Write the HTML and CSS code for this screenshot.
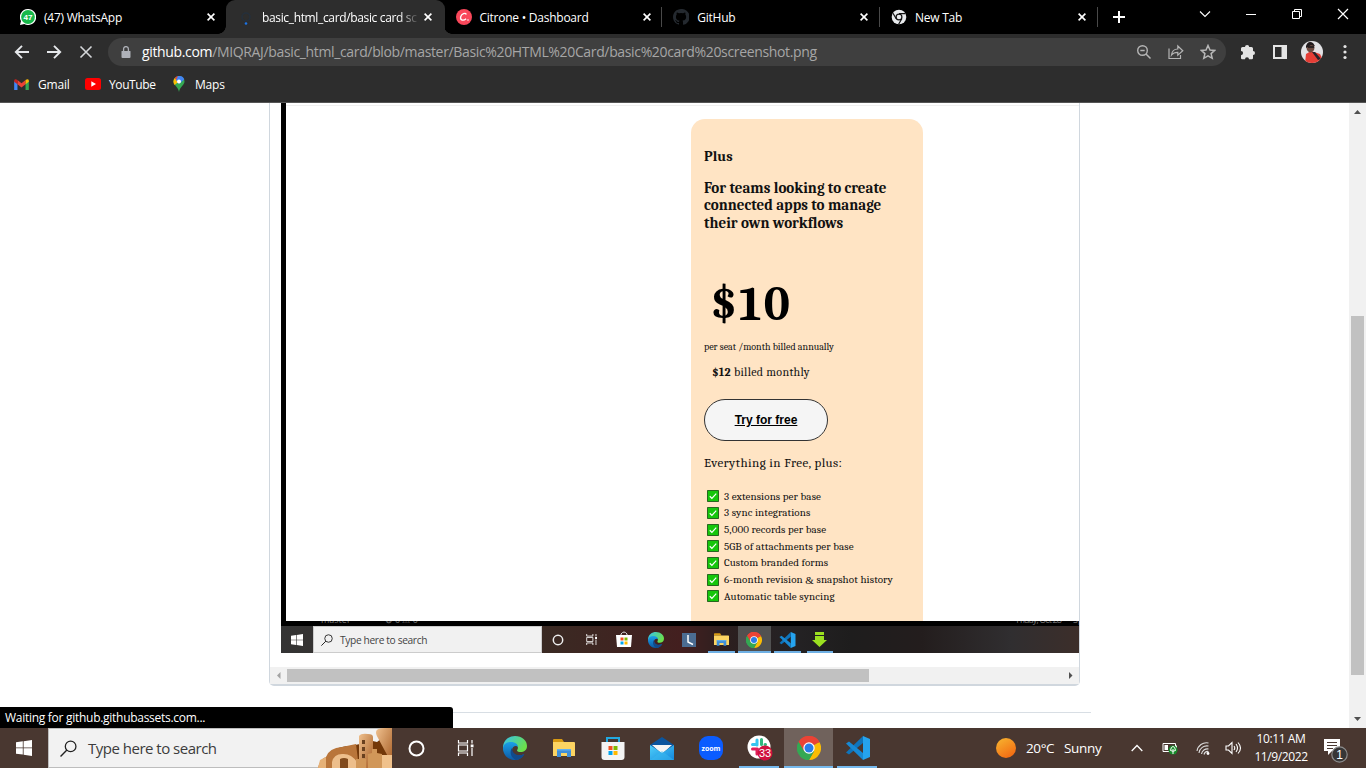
FILE: index.html
```html
<!DOCTYPE html>
<html lang="en">
<head>
<meta charset="utf-8">
<title>basic_html_card/basic card screenshot.png</title>
<link rel="stylesheet" href="styles.css">
</head>
<body>
<svg class="defs" width="0" height="0">
  <defs>
    <linearGradient id="edgeA" x1="0" y1="0" x2="1" y2="0.5"><stop offset="0" stop-color="#35c1f1"/><stop offset="1" stop-color="#6be04b"/></linearGradient>
    <linearGradient id="edgeB" x1="0" y1="0" x2="0" y2="1"><stop offset="0" stop-color="#1ba0e8"/><stop offset="1" stop-color="#0c59a4"/></linearGradient>
    <linearGradient id="sunG" x1="0" y1="0" x2="0.6" y2="1"><stop offset="0" stop-color="#f7b731"/><stop offset="1" stop-color="#f36d13"/></linearGradient>
    <linearGradient id="sand" x1="0" y1="0" x2="1" y2="1"><stop offset="0" stop-color="#efc08e"/><stop offset="1" stop-color="#a85f26"/></linearGradient>
    <linearGradient id="mailG" x1="0" y1="0" x2="1" y2="1"><stop offset="0" stop-color="#4fd0fa"/><stop offset="1" stop-color="#1387dd"/></linearGradient>
    <clipPath id="face"><circle cx="11" cy="11" r="11"/></clipPath>
  </defs>
  <symbol id="close" viewBox="0 0 8 8"><path d="M.6.6l6.8 6.8M7.4.6L.6 7.4" stroke="#fff" stroke-width="1.6" fill="none"/></symbol>
  <symbol id="chrome" viewBox="0 0 24 24">
    <path d="M12 12L1.6 6A12 12 0 0 1 22.4 6z" fill="#ea4335"/>
    <path d="M12 12V24A12 12 0 0 1 1.6 6z" fill="#34a853"/>
    <path d="M12 12L22.4 6A12 12 0 0 1 12 24L17 15z" fill="#fbbc04"/>
    <path d="M1.6 6L6.8 15 12 6.5H22.7A12 12 0 0 0 1.6 6z" fill="#ea4335"/>
    <path d="M12 24L17.2 15 6.8 15A12 12 0 0 0 12 24z" fill="#34a853"/>
    <path d="M1.6 6L6.8 15 12 24A12 12 0 0 1 1.6 6z" fill="#34a853"/>
    <circle cx="12" cy="12" r="5.7" fill="#fff"/><circle cx="12" cy="12" r="4.5" fill="#2a7de8"/>
  </symbol>
  <symbol id="edge" viewBox="0 0 24 24">
    <path d="M0 12C0 4 6 0 12 0c7 0 12 4.500 12 10 0 4-3 6-6.500 6-3 0-4-1.300-3.200-2.300C16 11 14 8 10 8 5 8 1 10 0 15z" fill="url(#edgeA)"/>
    <path d="M0 12c.5-4 4-6 8-6 4.500 0 7 2.500 7 5-1.500-2-6-1-6 3.500 0 4 5 7 12 3.500C19 22 16 24 12 24 5 24 0 19 0 12z" fill="url(#edgeB)"/>
    <path d="M9 12c-3 4-1 10 4 12 4-.3 7-3 8.500-6C15 21 9 18 9 12z" fill="#114a8b"/>
  </symbol>
  <symbol id="folder" viewBox="0 0 22 18">
    <path d="M0 1q0-1 1-1h8l2 3H0z" fill="#d89a13"/><path d="M0 3h21q1 0 1 1v13H0z" fill="#fcd462"/>
    <path d="M4 18v-8h14v8h-4v-4H8v4z" fill="#3f8fd8"/><path d="M4 10h14v1.500H4z" fill="#62b1ee"/>
  </symbol>
  <symbol id="store" viewBox="0 0 24 24">
    <path d="M6 7V2h12v5" fill="none" stroke="#22a9e0" stroke-width="2"/><path d="M.5 6h23v15q0 3-3 3h-17q-3 0-3-3z" fill="#f4f4f4"/>
    <path d="M7.500 10h4v4h-4z" fill="#f25022"/><path d="M12.500 10h4v4h-4z" fill="#7fba00"/><path d="M7.500 15h4v4h-4z" fill="#00a4ef"/><path d="M12.500 15h4v4h-4z" fill="#ffb900"/>
  </symbol>
  <symbol id="vscode" viewBox="0 0 24 24">
    <path d="M17 0l7 3v18l-7 3z" fill="#25a3ee"/><path d="M17 0v7L3 18.500l-3-2z" fill="#0f74bb"/><path d="M0 7.500l3-2L17 17v7z" fill="#1789d4"/>
  </symbol>
  <symbol id="win" viewBox="0 0 16 16"><path d="M0 2.300L6.800 1.300v6.200H0zM7.600 1.200L16 0v7.500H7.600zM0 8.300h6.800v6.300L0 13.700zM7.600 8.300H16V16l-8.400-1.200z" fill="#fff"/></symbol>
  <symbol id="task" viewBox="0 0 16 16"><path d="M1 0v3h9V0M1 16v-3h9v3M1 5h9v6H1zM14.500 0v3.500M14.500 8v8" fill="none" stroke="#fff" stroke-width="1.200"/><path d="M13.200 4.500h2.800v2.800h-2.800z" fill="#fff"/></symbol>
  <symbol id="loupe" viewBox="0 0 16 16"><circle cx="10" cy="6" r="5" fill="none" stroke="#222" stroke-width="1.200"/><path d="M6.500 9.500L.5 15.500" stroke="#222" stroke-width="1.300"/></symbol>
  <symbol id="tick" viewBox="0 0 13 13"><path d="M.5.500h12v12H.5z" fill="#16c60c" stroke="#1c5a18"/><path d="M3 6.800l2.300 2.300L10 4" fill="none" stroke="#fff" stroke-width="1.300"/></symbol>
</svg>

<header class="browser">
  <div class="tabstrip">
    <div class="tab">
      <svg class="fav" viewBox="0 0 16 16"><path d="M8 0a8 8 0 1 1-3.700 15L0 16l1-4A8 8 0 0 1 8 0z" fill="#fff"/><circle cx="8" cy="8" r="6.900" fill="#17b84a"/><text x="8" y="10.800" class="favnum">47</text></svg>
      <span class="tab-title">(47) WhatsApp</span><svg class="x"><use href="#close"/></svg>
    </div>
    <div class="tab active">
      <svg class="fav" viewBox="0 0 16 16"><circle cx="8" cy="8" r="4" fill="none" stroke="#25303c" stroke-width="1.500"/><circle cx="8" cy="14.500" r="1.300" fill="#1a73e8"/></svg>
      <span class="tab-title fade">basic_html_card/basic card sc</span><svg class="x"><use href="#close"/></svg>
    </div>
    <div class="tab sep">
      <svg class="fav" viewBox="0 0 16 16"><circle cx="8" cy="8" r="8" fill="#f9475a"/><path d="M10.300 5.500C9.500 3.500 5.500 4.500 4.600 8c-.6 3.500 3 4 5.500 1.700" fill="none" stroke="#fff" stroke-width="1.300"/><circle cx="12" cy="11" r=".8" fill="#fff"/></svg>
      <span class="tab-title">Citrone • Dashboard</span><svg class="x"><use href="#close"/></svg>
    </div>
    <div class="tab sep">
      <svg class="fav" viewBox="0 0 16 16"><path fill="#24292f" d="M8 0C3.580 0 0 3.580 0 8c0 3.540 2.290 6.530 5.470 7.590.4.070.55-.17.55-.38v-1.330c-2.010.37-2.530-.49-2.690-.94-.09-.23-.48-.94-.82-1.130-.28-.15-.68-.52-.01-.53.63-.01 1.080.58 1.230.82.72 1.210 1.870.87 2.330.66.070-.52.280-.87.510-1.070-1.780-.2-3.640-.89-3.640-3.950 0-.87.31-1.590.82-2.150-.08-.2-.36-1.020.08-2.120 0 0 .67-.21 2.200.82a7.500 7.500 0 0 1 4 0c1.530-1.040 2.200-.82 2.200-.82.44 1.100.16 1.920.08 2.120.51.560.82 1.270.82 2.150 0 3.070-1.870 3.750-3.650 3.950.29.25.54.73.54 1.480v2.190c0 .21.15.46.55.38A8 8 0 0 0 8 0z"/></svg>
      <span class="tab-title">GitHub</span><svg class="x"><use href="#close"/></svg>
    </div>
    <div class="tab sep">
      <svg class="fav" viewBox="0 0 16 16"><circle cx="8" cy="8" r="7.300" fill="#e8eaed"/><circle cx="8" cy="8" r="2.900" fill="#e8eaed" stroke="#111" stroke-width="1.200"/><path d="M8 4.700h6.500M5.200 9.700L2 4.200M10.800 9.700L7.600 15.300" stroke="#111" stroke-width="1.200"/></svg>
      <span class="tab-title">New Tab</span><svg class="x"><use href="#close"/></svg>
    </div>
    <svg class="plus" viewBox="0 0 12 12"><path d="M6 0v12M0 6h12" stroke="#fff" stroke-width="2"/></svg>
    <div class="window-buttons">
      <svg viewBox="0 0 12 12"><path d="M1 3.500l5 5 5-5" stroke="#fff" stroke-width="1.100" fill="none"/></svg>
      <svg viewBox="0 0 12 12"><path d="M1 6.500h10" stroke="#fff"/></svg>
      <svg viewBox="0 0 12 12"><path d="M1.500 3.500h7v7h-7zM3.500 3.500v-2h7v7h-2" stroke="#fff" fill="none"/></svg>
      <svg viewBox="0 0 12 12"><path d="M1 1l10 10M11 1L1 11" stroke="#fff" stroke-width="1.200"/></svg>
    </div>
  </div>

  <div class="toolbar">
    <svg class="nav" viewBox="0 0 16 16"><path d="M15 8H2M8 1.800L1.800 8 8 14.200" fill="none" stroke="#e6e8eb" stroke-width="1.900"/></svg>
    <svg class="nav" viewBox="0 0 16 16"><path d="M1 8h13M8 1.800L14.200 8 8 14.200" fill="none" stroke="#e6e8eb" stroke-width="1.900"/></svg>
    <svg class="nav" viewBox="0 0 16 16"><path d="M2.500 2.500l11 11M13.500 2.500l-11 11" stroke="#d5d7da" stroke-width="1.600"/></svg>
    <div class="omnibox">
      <svg class="lock" viewBox="0 0 10 12"><path d="M1 5h8q.5 0 .5.500V11q0 1-1 1h-7q-1 0-1-1V5.500Q.5 5 1 5z" fill="#aeb1b8"/><path d="M2.600 5V3a2.400 2.400 0 0 1 4.800 0v2" fill="none" stroke="#aeb1b8" stroke-width="1.300"/></svg>
      <span class="url"><b>github.com</b>/MIQRAJ/basic_html_card/blob/master/Basic%20HTML%20Card/basic%20card%20screenshot.png</span>
      <svg class="oi" viewBox="0 0 16 16"><circle cx="6.500" cy="6.500" r="4.800" fill="none" stroke="#b5b5b5" stroke-width="1.400"/><path d="M10 10l4.500 4.500M4.300 6.500h4.400" stroke="#b5b5b5" stroke-width="1.500"/></svg>
      <svg class="oi" viewBox="0 0 16 16"><path d="M1 4.500V14.500h11.500V11M3.500 11C4 7 6.500 5 9.800 5V2l5 4.700-5 4.500V8.300C7 8.300 5 9 3.500 11z" fill="none" stroke="#b5b5b5" stroke-width="1.200"/></svg>
      <svg class="oi" viewBox="0 0 16 16"><path d="M8 1.500l2 4.500 4.700.4-3.600 3.200 1.100 4.700L8 11.800l-4.200 2.500 1.100-4.700L1.300 6.400 6 6z" fill="none" stroke="#b8b8b8" stroke-width="1.500"/></svg>
    </div>
    <svg class="act" viewBox="0 0 16 16"><path d="M1 4.500Q1 3 2.500 3H5a2 2 0 1 1 4.200 0h2.300Q13 3 13 4.500V7a2 2 0 1 1 0 4v3q0 1.200-1.200 1.200H9a2 2 0 1 0-4 0H2.200Q1 15.200 1 14v-2.800a2.100 2.100 0 1 0 0-4.200z" fill="#e4e4e4"/></svg>
    <svg class="act" viewBox="0 0 16 16"><path d="M2 2h12v12H2z" fill="none" stroke="#e4e4e4" stroke-width="2"/><path d="M9.500 2H15v12H9.500z" fill="#e4e4e4"/></svg>
    <svg class="avatar" viewBox="0 0 22 22"><g clip-path="url(#face)"><path d="M0 0h22v22H0z" fill="#e2e2e5"/><path d="M4 22l1-9 5-3 9 3 2 4-3 5z" fill="#e53e36"/><ellipse cx="9.500" cy="6.500" rx="4" ry="5" fill="#6b4a40"/><path d="M5 5Q7-1 12 2l2 3-4-1-5 3z" fill="#211b1d"/><path d="M7 6h6" stroke="#161619" stroke-width="1.300"/><path d="M11 11l3 0 6 7-3 1z" fill="#27242b"/></g></svg>
    <svg class="menu" viewBox="0 0 4 16"><circle cx="2" cy="2.500" r="1.600" fill="#e4e4e4"/><circle cx="2" cy="8" r="1.600" fill="#e4e4e4"/><circle cx="2" cy="13.500" r="1.600" fill="#e4e4e4"/></svg>
  </div>

  <div class="bookmarks">
    <span class="bm gmail"><svg viewBox="0 0 16 12" width="15" height="11"><path d="M0 2v10h3.600V4.500z" fill="#4285f4"/><path d="M16 2v10h-3.600V4.500z" fill="#34a853"/><path d="M3.600 1.200L8 4.600l4.400-3.400v4.500L8 9.200 3.600 5.700z" fill="#ea4335"/><path d="M0 2Q.5-.8 3.600 1.200v4.500L0 3z" fill="#c5221f"/><path d="M16 2q-.5-2.800-3.600-.8v4.500L16 3z" fill="#fbbc04"/></svg>Gmail</span>
    <span class="bm yt"><svg viewBox="0 0 16 12" width="16" height="12"><rect width="16" height="12" rx="2.500" fill="#f00"/><path d="M6.300 3.300v5.400L11 6z" fill="#fff"/></svg>YouTube</span>
    <span class="bm maps"><svg viewBox="0 0 12 16" width="12" height="16"><path d="M6 0a5.500 5.500 0 0 0-5.500 5.500C.5 9 5 10.500 6 16c1-5.500 5.500-7 5.500-10.500A5.500 5.500 0 0 0 6 0z" fill="#34a853"/><path d="M1.800 2L6 5.500 1.500 9Q-.8 5 1.800 2z" fill="#fbbc04"/><path d="M1.700 2A5.500 5.500 0 0 1 6 0L4 5z" fill="#ea4335"/><path d="M5 0q5-.5 6.200 3.500L6 8 3 4z" fill="#4285f4"/><circle cx="6" cy="5.500" r="2" fill="#fff"/></svg>Maps</span>
  </div>
</header>

<main class="viewport">
  <section class="page">
    <div class="viewer">
      <div class="shot">
        <div class="shot-page">
          <article class="card">
            <h3 class="plan">Plus</h3>
            <p class="lead">For teams looking to create<br>connected apps to manage<br>their own workflows</p>
            <p class="price">$10</p>
            <p class="annual">per seat /month billed annually</p>
            <p class="monthly"><b>$12</b> billed monthly</p>
            <a class="try">Try for free</a>
            <p class="every">Everything in Free, plus:</p>
            <ul class="features">
              <li><svg><use href="#tick"/></svg>3 extensions per base</li>
              <li><svg><use href="#tick"/></svg>3 sync integrations</li>
              <li><svg><use href="#tick"/></svg>5,000 records per base</li>
              <li><svg><use href="#tick"/></svg>5GB of attachments per base</li>
              <li><svg><use href="#tick"/></svg>Custom branded forms</li>
              <li><svg><use href="#tick"/></svg>6-month revision <span class="amp">&amp;</span> snapshot history</li>
              <li><svg><use href="#tick"/></svg>Automatic table syncing</li>
            </ul>
          </article>
        </div>
        <div class="strip"><span class="branch">master</span><span class="sync">⊗ 0 ⚠ 0</span><span class="date">Friday, Oct 28</span><span class="sp">Sp</span></div>
        <div class="mini-bar">
          <div class="mini-start"><svg width="12" height="12"><use href="#win"/></svg></div>
          <div class="mini-search"><svg width="12" height="12"><use href="#loupe"/></svg>Type here to search</div>
          <div class="mini-item"><svg width="12" height="12" viewBox="0 0 12 12"><circle cx="6" cy="6" r="4.700" fill="none" stroke="#eee" stroke-width="1.500"/></svg></div>
          <div class="mini-item"><svg width="11" height="11"><use href="#task"/></svg></div>
          <div class="mini-item"><svg width="16" height="17" viewBox="0 0 16 17"><path d="M5 5V3q3-4 6 0v2" fill="none" stroke="#ddd"/><path d="M0 4h16l-1 12H1z" fill="#fff"/><path d="M4.500 6.500h3v3h-3z" fill="#f25022"/><path d="M8.500 6.500h3v3h-3z" fill="#7fba00"/><path d="M4.500 10.500h3v3h-3z" fill="#00a4ef"/><path d="M8.500 10.500h3v3h-3z" fill="#ffb900"/></svg></div>
          <div class="mini-item"><svg width="16" height="16"><use href="#edge"/></svg></div>
          <div class="mini-item"><svg width="14" height="14" viewBox="0 0 14 14"><path d="M0 0h14v14H0z" fill="#4b6c91"/><path d="M6 2v7l5 2.500" fill="none" stroke="#fff" stroke-width="1.500"/></svg></div>
          <div class="mini-item open"><svg width="15" height="13"><use href="#folder"/></svg></div>
          <div class="mini-item open on"><svg width="16" height="16"><use href="#chrome"/></svg></div>
          <div class="mini-item open"><svg width="17" height="16"><use href="#vscode"/></svg></div>
          <div class="mini-item open"><svg width="15" height="15" viewBox="0 0 15 15"><path d="M3 0h9v3H3zM3 4h9v4h3l-7.500 7L0 8h3z" fill="#9be020"/></svg></div>
        </div>
      </div>
      <div class="hscroll">
        <svg width="17" height="17" viewBox="0 0 17 17"><path d="M10.500 5v7L7 8.500z" fill="#a3a3a3"/></svg>
        <div class="hthumb"></div>
        <svg class="end" width="17" height="17" viewBox="0 0 17 17"><path d="M7 5v7l3.500-3.500z" fill="#505050"/></svg>
      </div>
    </div>
    <div class="rule"></div>
  </section>
  <div class="vscroll">
    <svg width="17" height="17" viewBox="0 0 17 17"><path d="M5 11h7L8.500 7z" fill="#505050"/></svg>
    <div class="vthumb"></div>
    <svg class="end" width="17" height="17" viewBox="0 0 17 17"><path d="M5 6h7l-3.500 4z" fill="#505050"/></svg>
  </div>
  <div class="status">Waiting for github.githubassets.com...</div>
</main>

<footer class="taskbar">
  <div class="start"><svg width="16" height="16"><use href="#win"/></svg></div>
  <div class="search"><svg width="17" height="17"><use href="#loupe"/></svg><span>Type here to search</span>
    <svg class="town" viewBox="0 0 74 40"><path d="M14 40V27q0-8 18-9l10-2 4-5 13 3 15-12v38z" fill="#733809"/><path d="M60 10Q54 0 66 0h8v36z" fill="url(#sand)"/><path d="M0 40q2-9 8-11 3-9 16-10l14-3 3 24z" fill="#b9753a"/><path d="M41 40V8q2-3 9-2 5 0 5 3v31z" fill="url(#sand)"/><path d="M14 40v-6q2-8 10-8 9-1 15 8v6z" fill="#edbe8b"/><path d="M38 31h10v9H38zM50 26l4-1v-4h5v4l5 1v14H50z" fill="#d19759"/><path d="M22 31q4-2 8 0v9h-8z" fill="#814a1c"/><path d="M44 12h3v4h-3zM44 19h3v4h-3zM44 26h3v4h-3z" fill="#69401f"/><path d="M64 27h10v13H64z" fill="#f0c18b"/><path d="M0 40l2-8 6-3v11z" fill="#e6b177"/></svg>
  </div>
  <div class="app"><svg width="17" height="17" viewBox="0 0 17 17"><circle cx="8.500" cy="8.500" r="7" fill="none" stroke="#fff" stroke-width="2"/></svg></div>
  <div class="app"><svg width="17" height="16"><use href="#task"/></svg></div>
  <div class="app"><svg width="24" height="24"><use href="#edge"/></svg></div>
  <div class="app"><svg width="22" height="18"><use href="#folder"/></svg></div>
  <div class="app"><svg width="24" height="24"><use href="#store"/></svg></div>
  <div class="app"><svg width="24" height="23" viewBox="0 0 24 23"><path d="M0 8l12-8 12 8v5H0z" fill="#0b559e"/><path d="M2 8h20l-10 9z" fill="#f5f5f5"/><path d="M0 8l12 8 12-8v15H0z" fill="url(#mailG)"/><path d="M0 23l12-9 12 9z" fill="#39b9f0" opacity=".5"/></svg></div>
  <div class="app"><svg width="24" height="24" viewBox="0 0 24 24"><rect width="24" height="24" rx="9" fill="#0b5cff"/><text x="12" y="14.500" class="zoomtxt">zoom</text></svg></div>
  <div class="app open"><svg class="slack" width="26" height="26" viewBox="0 0 26 26"><circle cx="12" cy="12" r="11.500" fill="#fff"/><g stroke-width="3" stroke-linecap="round"><path d="M10 5v5M5.500 9.500h4" stroke="#36c5f0"/><path d="M14.500 4.500v5M18.500 9.500h-.5" stroke="#2eb67d"/><path d="M5.500 14h5M10 14v5" stroke="#e01e5a"/><path d="M14.500 14h4" stroke="#ecb22e"/></g><circle cx="18" cy="18" r="7.500" fill="#d0113f"/><text x="18" y="22" class="count">33</text></svg></div>
  <div class="app open on"><svg width="24" height="24"><use href="#chrome"/></svg></div>
  <div class="app open"><svg width="24" height="24"><use href="#vscode"/></svg></div>
  <div class="tray">
    <svg class="sun" width="20" height="20" viewBox="0 0 20 20"><circle cx="10" cy="10" r="10" fill="url(#sunG)"/></svg>
    <span class="deg">20°C</span><span class="sunny">Sunny</span>
    <svg class="chev" width="12" height="8" viewBox="0 0 12 8"><path d="M.7 7L6 1.500 11.300 7" fill="none" stroke="#fff" stroke-width="1.300"/></svg>
    <svg class="batt" width="16" height="14" viewBox="0 0 16 14"><path d="M1 2.500h12.500v8H1zM14.500 4.500v4" fill="none" stroke="#fff"/><path d="M2.500 4H6v5H2.500z" fill="#fff"/><circle cx="11" cy="9" r="4.500" fill="#168b2a"/><path d="M11 13V8M8.500 9.500Q9 5.500 11 5.500t2.500 4q-2.500 1.500-5 0z" fill="none" stroke="#fff"/></svg>
    <svg class="wifi" width="14" height="14" viewBox="0 0 14 14"><g fill="none" stroke="#ddd" stroke-width="1.100"><path d="M1 10A9.500 9.500 0 0 1 12.500 2M3 12a8 8 0 0 1 9.500-7M5.500 13a6 6 0 0 1 7-5M8 13.500a4 4 0 0 1 4.500-3"/></g><circle cx="12" cy="12.500" r="1.400" fill="#fff"/></svg>
    <svg class="vol" width="17" height="14" viewBox="0 0 17 14"><path d="M1 5h2.500L7 1.500v11L3.500 9H1zM9 5q1.500 2 0 4M11 3q3 4 0 8M13 1.500q5 5.500 0 11" fill="none" stroke="#fff" stroke-width="1.100"/></svg>
    <div class="clock"><span>10:11 AM</span><span>11/9/2022</span></div>
    <svg class="note" width="25" height="26" viewBox="0 0 25 26"><path d="M1 1h16v12H9l-4 4v-4H1z" fill="#fff"/><path d="M4 4.500h10M4 7.500h10M4 10.500h6" stroke="#4b3a33"/><circle cx="16.500" cy="16.500" r="7.700" fill="#373636" stroke="#8d8d8d" stroke-width="1.200"/><text x="16.500" y="20.600" class="count one">1</text></svg>
  </div>
</footer>
</body>
</html>
```
FILE: styles.css
```css
* { box-sizing: border-box; }
body { margin: 0; width: 1366px; height: 768px; overflow: hidden; display: flex; flex-direction: column; background: #fff; font-family: "Segoe UI", "Open Sans", "Noto Sans", sans-serif; font-size: 12px; }
svg { flex: none; display: block; }
p, h3, ul { margin: 0; padding: 0; }
.defs { position: absolute; }

/* browser chrome */
.browser { height: 103px; background: #2d2d2d; border-bottom: 1px solid #555; color: #fff; }
.tabstrip { height: 34px; background: #000; display: flex; padding-left: 10px; }
.tab { width: 217.75px; flex: none; display: flex; align-items: center; padding: 0 11.75px 0 10px; border-right: 1px solid transparent; position: relative; }
.tab.sep::after { content: ""; position: absolute; right: 0; top: 7px; width: 1px; height: 20px; background: #494949; }
.tab.active { background: #2d2d2d; border-radius: 9px 9px 0 0; width: 219px; margin: 0 1px 0 -2.250px; padding-left: 12.500px; }
.tab.active::before { content: ""; position: absolute; left: -8px; bottom: 0; width: 8px; height: 8px; background: radial-gradient(circle at 0 0, transparent 7.500px, #2d2d2d 8px); }
.tab.active::after { content: ""; position: absolute; right: -8px; bottom: 0; width: 8px; height: 8px; background: radial-gradient(circle at 100% 0, transparent 7.500px, #2d2d2d 8px); }
.fav { width: 16px; height: 16px; margin-right: 8px; }
.favnum { font: bold 8px "Liberation Sans", sans-serif; fill: #fff; text-anchor: middle; }
.tab-title { flex: 1; white-space: nowrap; letter-spacing: -0.25px; }
.tab-title.fade { letter-spacing: -0.35px; -webkit-mask-image: linear-gradient(90deg, #000 85%, transparent 97%); mask-image: linear-gradient(90deg, #000 85%, transparent 97%); }
.x { width: 8px; height: 8px; }
.plus { width: 12px; height: 12px; margin: 11px 0 0 14px; }
.window-buttons { display: flex; gap: 34px; margin: 8px 0 0 74px; }
.window-buttons svg { width: 12px; height: 12px; }
.toolbar { height: 36px; display: flex; align-items: center; padding-left: 14px; }
.nav { width: 16px; height: 16px; margin-right: 16px; }
.omnibox { width: 1118px; height: 28px; border-radius: 14px; background: #3f3f3f; margin: 0 14px 0 -2px; display: flex; align-items: center; padding: 0 10px 0 13px; }
.lock { width: 10px; height: 12px; margin: 0 11px 0 0; }
.url { flex: 1; font-size: 14px; line-height: 20px; margin-top: -1px; color: #a6a6a6; letter-spacing: -0.350px; white-space: nowrap; }
.url b { font-weight: 400; color: #fff; }
.oi { width: 16px; height: 16px; margin-left: 16px; }
.act { width: 16px; height: 16px; margin-right: 16px; }
.avatar { width: 22px; height: 22px; margin: 0 20px 0 -3px; }
.menu { width: 4px; height: 16px; }
.bookmarks { height: 28px; display: flex; align-items: center; }
.bm { display: flex; align-items: center; gap: 8px; letter-spacing: -0.2px; }
.gmail { width: 71px; margin-left: 14px; gap: 9px; }
.yt { width: 88px; letter-spacing: -0.4px; }
.maps { gap: 10px; }

/* page */
.viewport { height: 625px; display: flex; position: relative; }
.page { width: 1349px; }
.viewer { width: 811px; height: 583px; margin-left: 269px; border: 1px solid #d0d7de; border-top: 0; border-bottom-width: 2px; border-radius: 0 0 5px 5px; padding-left: 11px; }
.shot { width: 798px; height: 550px; }
.shot-page { height: 518px; border-left: 5px solid #000; background: linear-gradient(#f0f0f0, #f0f0f0) 0 2px / 100% 1px no-repeat; padding: 16px 0 0 405px; }
.card { width: 232px; height: 502px; background: #ffe4c4; border-radius: 14px 14px 0 0; padding: 29px 0 0 13px; font-family: Cambria, Caladea, "Liberation Serif", serif; color: #111; white-space: nowrap; }
.plan { font-size: 14.500px; line-height: 17.500px; letter-spacing: 0.1px; }
.lead { margin-top: 14px; font-size: 15px; font-weight: 700; line-height: 17.500px; letter-spacing: 0.02px; }
.price { margin: 42px 0 0 6px; font-size: 49px; font-weight: 700; line-height: 60px; letter-spacing: 2.300px; color: #000; }
.annual { margin-top: 6px; font-size: 10px; line-height: 14px; }
.monthly { margin: 10px 0 0 8px; font-size: 12px; line-height: 16px; letter-spacing: 0.3px; }
.try { display: flex; width: 124px; height: 42px; margin-top: 19px; align-items: center; justify-content: center; border: 1px solid #333; border-radius: 21px; background: #f5f5f5; font: bold 12px "Liberation Sans", sans-serif; color: #000; text-decoration: underline; }
.every { margin-top: 13px; font-size: 13px; line-height: 18px; letter-spacing: 0.4px; }
.features { list-style: none; margin: 16px 0 0 3px; font-size: 11px; }
.features li { height: 16.670px; display: flex; align-items: center; letter-spacing: 0.1px; white-space: pre; }
.features svg { width: 12px; height: 12px; margin-right: 5px; }
.amp { font-family: "Liberation Serif", serif; }
.strip { height: 5px; background: #000; color: #777; font-size: 9px; line-height: 14px; overflow: hidden; display: flex; }
.strip span { margin-top: -8px; }
.branch { margin-left: 40px; }
.sync { margin-left: 34px; }
.date { margin-left: auto; letter-spacing: -0.9px; }
.sp { width: 6px; margin-left: 12px; overflow: hidden; }
.mini-bar { height: 27px; display: flex; background: linear-gradient(90deg, #343434 0, #3a2a23 260px, #431f1f 400px, #2c1f1f 445px, #242224 510px, #1e1d1d 570px, #231d1d 640px, #302e30 730px, #3c2e2a); }
.mini-start { width: 32px; display: flex; align-items: center; justify-content: center; }
.mini-search { width: 229px; background: #f1f1f1; border: 1px solid #ccc; color: #444; display: flex; align-items: center; gap: 7px; padding-left: 7px; font-size: 10px; letter-spacing: -0.35px; }
.mini-search { font-size: 10.200px; }
.mini-item { width: 32.700px; display: flex; align-items: center; justify-content: center; position: relative; }
.mini-item.open::after { content: ""; position: absolute; left: 3px; right: 3px; bottom: 0; height: 2px; background: #6fb0e4; }
.mini-item.on { background: #515151; }
.mini-item.on::after { left: 0; right: 0; }
.hscroll { height: 17px; width: 809px; margin: 14px 0 0 -11px; background: #f1f1f1; display: flex; }
.hthumb { width: 582px; height: 13px; margin-top: 2px; background: #c1c1c1; }
.hscroll .end { margin-left: auto; }
.rule { height: 1px; width: 833px; margin: 26px 0 0 258px; background: #d8dee4; }
.vscroll { width: 17px; background: #f1f1f1; display: flex; flex-direction: column; }
.vthumb { width: 13px; height: 359px; margin: 196px 0 0 2px; background: #c1c1c1; }
.vscroll .end { margin-top: auto; }
.status { position: absolute; left: 0; bottom: 0; width: 453px; height: 21px; background: #000; color: #fff; border-radius: 0 3px 0 0; padding-left: 5px; line-height: 21px; letter-spacing: -0.28px; }

/* taskbar */
.taskbar { height: 40px; background: #493730; display: flex; color: #fff; }
.start { width: 48px; display: flex; align-items: center; justify-content: center; }
.search { width: 344px; background: #f2f2f2; border: 1px solid #bdbdbd; border-right: 0; display: flex; align-items: center; padding-left: 11px; position: relative; color: #3c3c3c; font-size: 15px; letter-spacing: -0.5px; }
.search span { margin-left: 11px; }
.town { position: absolute; right: 0; top: -1px; width: 74px; height: 40px; }
.app { width: 49px; display: flex; align-items: center; justify-content: center; position: relative; }
.app.open::after { content: ""; position: absolute; left: 4px; right: 5px; bottom: 0; height: 2px; background: #76b9ed; }
.app.on { background: #70625c; }
.app.on::after { left: 0; right: 0; }
.zoomtxt { font: bold 7px "Open Sans", sans-serif; fill: #fff; text-anchor: middle; }
.count { font: 11px "Liberation Sans", sans-serif; fill: #fff; text-anchor: middle; }
.count.one { font-size: 12px; }
.tray { flex: 1; display: flex; align-items: center; }
.sun { margin-left: 114px; }
.deg { width: 38px; margin-left: 10px; font-size: 13.500px; letter-spacing: -0.4px; white-space: nowrap; }
.sunny { width: 46px; font-size: 13.500px; letter-spacing: -0.3px; }
.chev { margin-left: 21px; }
.batt { margin-left: 19px; }
.wifi { margin-left: 18px; }
.vol { margin-left: 15px; }
.clock { width: 60px; margin-left: 9px; display: flex; flex-direction: column; align-items: center; line-height: 18px; letter-spacing: -0.4px; }
.note { margin: 5px 0 0 12px; }
```
